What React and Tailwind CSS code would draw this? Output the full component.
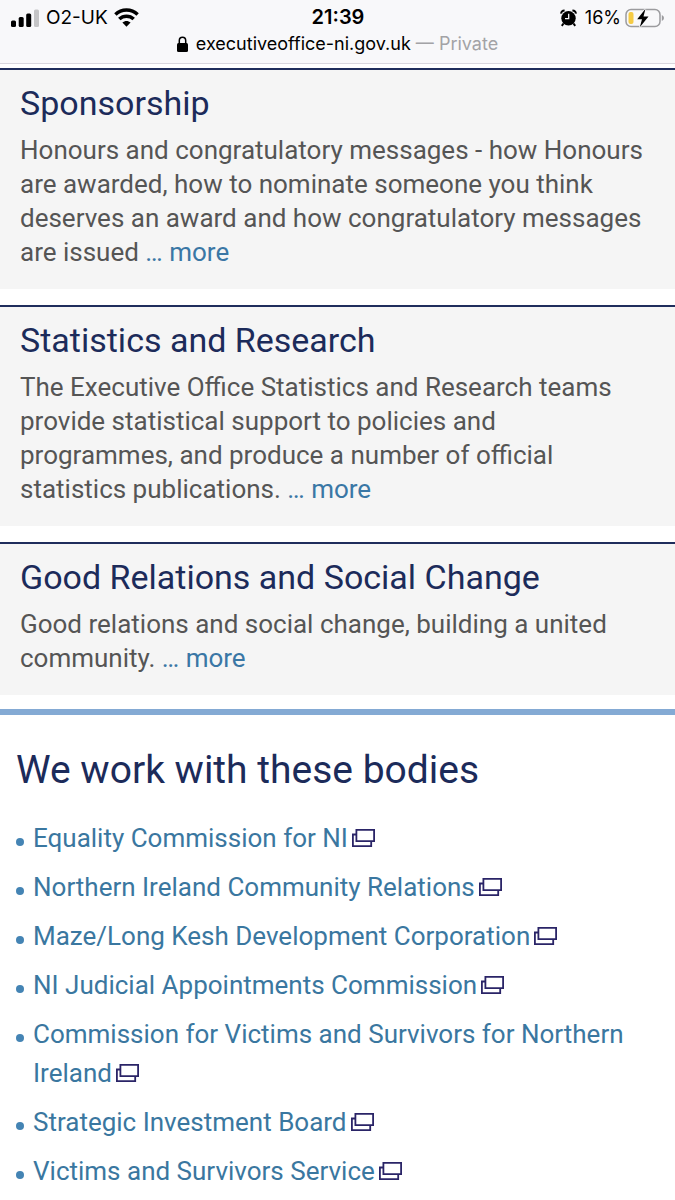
import React from "react";

const topics = [
  {
    title: "Sponsorship",
    text: "Honours and congratulatory messages - how Honours are awarded, how to nominate someone you think deserves an award and how congratulatory messages are issued",
  },
  {
    title: "Statistics and Research",
    text: "The Executive Office Statistics and Research teams provide statistical support to policies and programmes, and produce a number of official statistics publications.",
  },
  {
    title: "Good Relations and Social Change",
    text: "Good relations and social change, building a united community.",
  },
];

const bodies = [
  "Equality Commission for NI",
  "Northern Ireland Community Relations",
  "Maze/Long Kesh Development Corporation",
  "NI Judicial Appointments Commission",
  "Commission for Victims and Survivors for Northern Ireland",
  "Strategic Investment Board",
  "Victims and Survivors Service",
];

function Signal() {
  return (
    <svg width="29" height="18" viewBox="0 0 29 18" aria-hidden="true">
      <rect x="0" y="11.5" width="5" height="6.5" rx="1.5" />
      <rect x="7.7" y="8" width="5" height="10" rx="1.5" />
      <rect x="15.2" y="4.5" width="5" height="13.5" rx="1.5" />
      <rect x="23" y="0.5" width="5" height="17.5" rx="1.5" fill="#c4c4c6" />
    </svg>
  );
}

function Wifi() {
  return (
    <svg width="25" height="19" viewBox="0 0 25 19" fill="none" stroke="#000" strokeWidth="3.5" aria-hidden="true">
      <path d="M1.4 6.5C7.6 .6 17.4 .6 23.6 6.5" />
      <path d="M5.3 11.1C9.3 7.2 15.7 7.2 19.7 11.1" />
      <path d="M8.4 14.6C10.8 12.3 14.2 12.3 16.6 14.6L12.5 18.7Z" fill="#000" stroke="none" />
    </svg>
  );
}

function Alarm() {
  return (
    <svg width="17" height="18" viewBox="0 0 17 18" aria-hidden="true">
      <circle cx="8.5" cy="9.3" r="7.2" />
      <path d="M1.2 4.6Q1 1.8 4.6 1.6M15.8 4.6Q16 1.8 12.4 1.6" fill="none" stroke="#000" strokeWidth="2" />
      <path d="M3.5 14.5L1.8 16.8M13.5 14.5L15.2 16.8" stroke="#000" strokeWidth="2" />
      <path d="M8.7 4.8V9.6H5" fill="none" stroke="#f8f8fa" strokeWidth="1.3" />
    </svg>
  );
}

function Battery() {
  return (
    <svg width="40" height="20" viewBox="0 0 40 20" aria-hidden="true">
      <rect x="1" y="1.5" width="34" height="17" rx="5" fill="none" stroke="#9b9b9e" strokeWidth="1.5" />
      <path d="M36.8 7Q39 8 39 10T36.8 13Z" fill="#9b9b9e" />
      <rect x="3.5" y="4" width="5" height="12" rx="2" fill="#f5cb45" />
      <path d="M20.5 .8L12.2 11.3H17L14.8 19.2L23.5 8.5H18.5Z" fill="#000" stroke="#f8f8fa" strokeWidth="1.5" paintOrder="stroke" />
    </svg>
  );
}

function Lock() {
  return (
    <svg width="11" height="17" viewBox="0 0 11 17" aria-hidden="true">
      <rect x="0" y="7" width="11" height="9" rx="1.5" />
      <path d="M2.3 8V4.5C2.3 0 8.7 0 8.7 4.5V8" fill="none" stroke="#000" strokeWidth="1.5" />
    </svg>
  );
}

function External() {
  return (
    <svg className="ml-1 inline-block align-baseline" width="23" height="18" viewBox="0 0 23 18" fill="none" stroke="#2a2467" strokeWidth="1.8" aria-hidden="true">
      <path d="M4.4 .9H22.1V12.2H4.4Z" />
      <path d="M4.4 5.5H.9V17.1H19.2V12.2" />
    </svg>
  );
}

export default function App() {
  return (
    <div className="bg-white font-['Roboto',sans-serif]">
      <header className="border-b border-[#d9d6de] bg-[#f8f8fa] font-['Inter',sans-serif] text-black">
        <div className="grid h-8 grid-cols-[1fr_auto_1fr] items-center pt-[2px] pr-[10px] pl-[11px] text-lg">
          <div className="flex items-center gap-[6px]">
            <Signal />
            <span className="text-[19px]">O2-UK</span>
            <Wifi />
          </div>
          <time className="text-[20px] font-semibold">21:39</time>
          <div className="flex items-center justify-end gap-1">
            <Alarm />
            <span className="ml-1">16%</span>
            <Battery />
          </div>
        </div>
        <div className="flex h-[31px] items-start justify-center gap-2 text-lg leading-6">
          <span className="pt-1"><Lock /></span>
          <span>
            executiveoffice-ni.gov.uk <span className="text-[#a3a3a6]">— Private</span>
          </span>
        </div>
      </header>
      <main>
        <div className="flex flex-col gap-4 pt-1">
          {topics.map((t) => (
            <section key={t.title} className="border-t-2 border-[#1f2d5c] bg-[#f5f5f5] px-5 pt-[13px] pb-5">
              <h2 className="text-[34px] leading-10 text-[#1c2b5a]">{t.title}</h2>
              <p className="mt-[10px] text-[26px] leading-[34px] text-[#555555]">
                {t.text}{" "}
                <a href="#more" className="text-[#3a77a5]">… more</a>
              </p>
            </section>
          ))}
        </div>
        <section className="mt-[14px] border-t-[6px] border-[#84aad4] px-4 pt-8 pb-2">
          <h2 className="text-[39px] leading-[46px] text-[#1c2b5a]">We work with these bodies</h2>
          <ul className="mt-[26px] flex flex-col gap-[10px]">
            {bodies.map((b) => (
              <li key={b} className="flex items-start gap-[9px] text-[26px] leading-[39px]">
                <span className="mt-[19px] size-2 shrink-0 rounded-full bg-[#4484b4]" />
                <a href="#body" className="text-[#3a77a0]">
                  {b}
                  <External />
                </a>
              </li>
            ))}
          </ul>
        </section>
      </main>
    </div>
  );
}
